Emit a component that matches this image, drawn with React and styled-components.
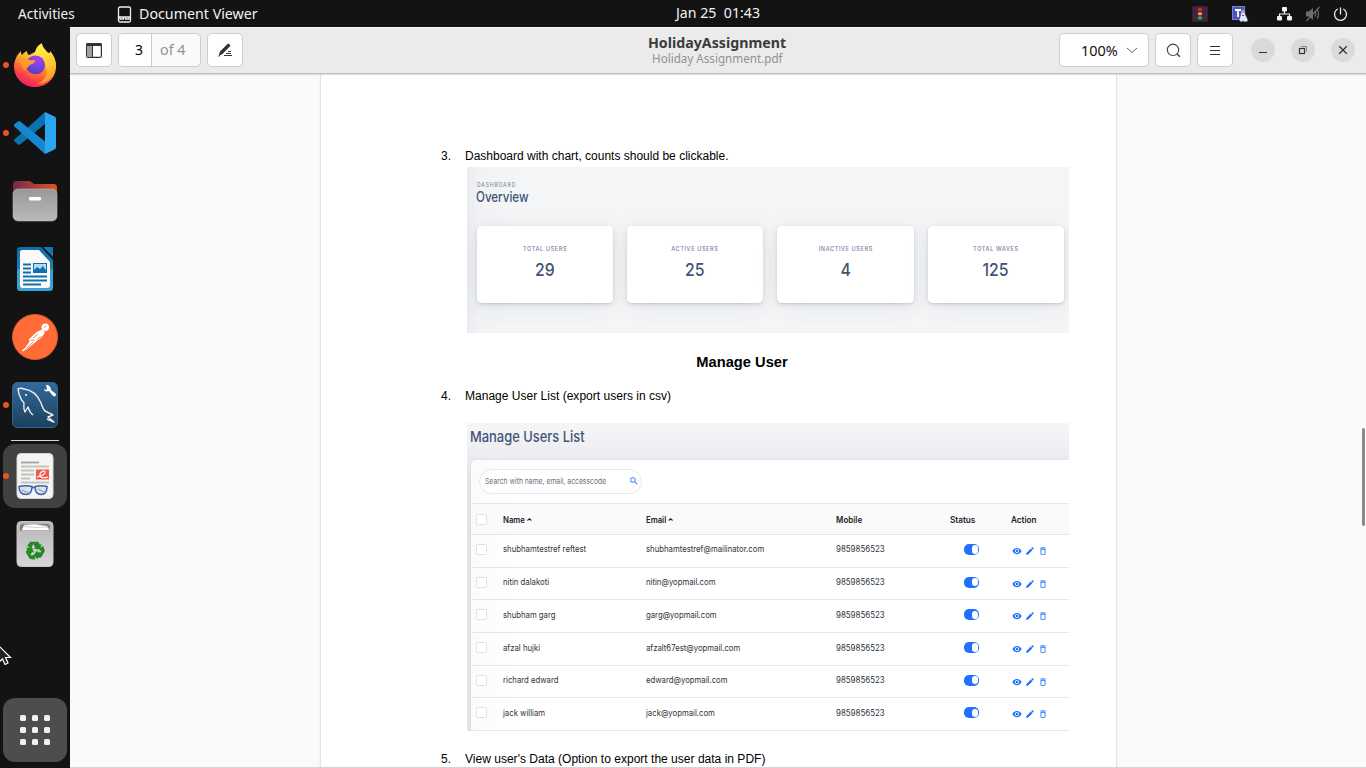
import React from "react";
import styled, { createGlobalStyle, css } from "styled-components";
import { MdRemoveRedEye, MdEdit, MdDeleteOutline, MdSearch } from "react-icons/md";

const Global = createGlobalStyle`
  * { box-sizing: border-box; }
  body { margin: 0; overflow: hidden; }
  svg { display: block; flex: none; }
`;

const ui = css`font-family: "Noto Sans", "Open Sans", sans-serif;`;
const doc = css`font-family: "Liberation Sans", Arial, sans-serif;`;

const Desktop = styled.div`
  ${ui}
  width: 1366px;
  height: 768px;
  display: flex;
  flex-direction: column;
  background: #131313;
  overflow: hidden;
  position: relative;
`;

/* Text drawn slightly narrower or wider than the font's natural width */
const Stretch = styled.span`
  display: inline-block;
  white-space: pre;
  transform: scaleX(${(p) => p.$x});
  transform-origin: ${(p) => p.$from || "left"} center;
`;

/* ---------- top bar ---------- */
const TopBar = styled.header`
  height: 27px;
  display: grid;
  grid-template-columns: 117px 551px 101px 1fr;
  align-items: center;
  color: #f2f2f2;
  font-size: 13.5px;
  line-height: 27px;
`;
const Activities = styled.div`
  padding-left: 18px;
  padding-top: 1px;
`;
const AppMenu = styled.div`
  display: flex;
  align-items: center;
  gap: 7px;
  padding-top: 1px;
`;
const Clock = styled.div`
  text-align: center;
  height: 27px;
  line-height: 25px;
`;
const Tray = styled.div`
  display: grid;
  grid-template-columns: 40px 45px 28px 28px 16px;
  justify-content: end;
  align-items: center;
  padding-right: 17px;
  height: 26px;
`;

/* ---------- dock ---------- */
const Main = styled.div`
  flex: 1;
  display: flex;
  min-height: 0;
`;
const Dock = styled.nav`
  width: 70px;
  padding: 6px 3px;
  display: flex;
  flex-direction: column;
`;
const Slot = styled.div`
  height: 64px;
  margin-bottom: 4px;
  border-radius: 12px;
  display: flex;
  align-items: center;
  justify-content: center;
  position: relative;
  background: ${(p) => p.$bg || "transparent"};
  ${(p) => p.$end && css`margin-top: auto; margin-bottom: 0;`}
  ${(p) =>
    p.$running &&
    css`
      &::before {
        content: "";
        position: absolute;
        left: 0;
        top: 29px;
        width: 6px;
        height: 6px;
        border-radius: 50%;
        background: #e95420;
      }
    `}
`;
const Divider = styled.div`
  height: 1px;
  margin: -1px 8px 3px;
  background: #d5d5d5;
`;
const Cursor = styled.svg`
  position: absolute;
  left: 0;
  top: 646px;
`;

/* ---------- window ---------- */
const Window = styled.section`
  flex: 1;
  display: flex;
  flex-direction: column;
  background: #fafafa;
  border-bottom: 1px solid #d4d4d4;
  position: relative;
`;
const HeaderBar = styled.div`
  height: 47px;
  flex: none;
  background: #ebebeb;
  border-top: 1px solid #f7f7f7;
  border-bottom: 1px solid #bfbfbf;
  box-shadow: 0 1px 1px rgba(0, 0, 0, 0.12);
  padding: 5px 11px 0 6px;
  display: grid;
  grid-template-columns: 1fr 280px 1fr;
  z-index: 1;
`;
const Group = styled.div`
  display: flex;
  gap: 6px;
  justify-content: ${(p) => (p.$end ? "flex-end" : "flex-start")};
`;
const Button = styled.button`
  ${ui}
  width: ${(p) => p.$w || 36}px;
  height: 34px;
  padding: ${(p) => p.$pad || 0};
  border: 1px solid #cdcdcd;
  border-radius: 5px;
  background: #fff;
  color: #111;
  font-size: 14px;
  display: flex;
  align-items: center;
  justify-content: ${(p) => (p.$pad ? "space-between" : "center")};
`;
const PageEntry = styled.div`
  width: 83px;
  height: 34px;
  border: 1px solid #cdcdcd;
  border-radius: 5px;
  background: #fafafa;
  display: flex;
  overflow: hidden;
  font-size: 14px;
  line-height: 31px;
`;
const PageNumber = styled.div`
  width: 33px;
  background: #fff;
  border-right: 1px solid #cdcdcd;
  padding-left: 16px;
  color: #000;
`;
const PageTotal = styled.div`
  padding-left: 8px;
  color: #929292;
`;
const TitleBlock = styled.div`
  text-align: center;
  padding-left: 3px;
`;
const Title = styled.div`
  font-size: 14px;
  font-weight: 700;
  line-height: 17px;
  color: #3b3b3b;
  margin-top: 1px;
`;
const Subtitle = styled.div`
  font-size: 12px;
  line-height: 17px;
  margin-top: -1px;
  color: #929292;
`;
const Round = styled.button`
  width: 24px;
  height: 24px;
  border: 0;
  padding: 0;
  border-radius: 50%;
  background: #dadada;
  display: flex;
  align-items: center;
  justify-content: center;
  margin: 5px 0 0 ${(p) => (p.$first ? 12 : 10)}px;
`;

const Viewport = styled.div`
  flex: 1;
  min-height: 0;
  overflow: hidden;
  padding-left: 251px;
`;
const Page = styled.article`
  ${doc}
  width: 795px;
  height: 900px;
  background: #fff;
  box-shadow: 0 0 0 1px #e4e4e4, 0 0 3px rgba(0, 0, 0, 0.12);
  padding: 73px 47px 0 120px;
  color: #000;
`;
const Item = styled.div`
  display: grid;
  grid-template-columns: 24px 1fr;
  font-size: 12px;
  line-height: 18px;
  height: 18px;
`;
const Heading = styled.h2`
  margin: 18px 0 0;
  padding: 0 52px 0 26px;
  text-align: center;
  font-size: 14.7px;
  line-height: 22px;
  height: 22px;
  font-weight: 700;
`;

const Figure = styled.div`
  font-family: Inter, "Liberation Sans", sans-serif;
  margin-left: 26px;
  width: 602px;
`;

/* ---------- overview figure ---------- */
const Overview = styled(Figure)`
  margin-top: 2px;
  height: 166px;
  padding: 14px 5px 0 9.5px;
  overflow: hidden;
  background: linear-gradient(90deg, rgba(215, 220, 226, 0.4), rgba(232, 235, 239, 0.25) 12px, transparent 50px), #f4f5f7;
`;
const Kicker = styled.div`
  font-size: 5.6px;
  line-height: 8px;
  letter-spacing: 0.95px;
  color: #818ea3;
  font-weight: 500;
`;
const FigureTitle = styled.div`
  font-size: ${(p) => p.$size}px;
  line-height: 18px;
  margin: ${(p) => p.$shift || 0}px 0 ${(p) => -(p.$shift || 0)}px -0.5px;
  font-weight: 550;
  color: #425475;
`;
const Cards = styled.div`
  margin-top: 19.5px;
  display: grid;
  grid-template-columns: repeat(4, 1fr);
  gap: 14px;
`;
const Card = styled.div`
  height: 77.5px;
  border-radius: 4.5px;
  background: #fff;
  text-align: center;
  padding-top: 19px;
  box-shadow: 0 2px 24px rgba(90, 97, 105, 0.06), 0 6px 24px rgba(90, 97, 105, 0.03),
    0 2px 5px rgba(90, 97, 105, 0.12), 0 1px 2px rgba(90, 97, 105, 0.16);
`;
const CardLabel = styled.div`
  font-size: 6.3px;
  line-height: 9px;
  letter-spacing: 0.7px;
  color: #76839b;
  font-weight: 500;
`;
const CardValue = styled.div`
  margin-top: 5px;
  font-size: 17.5px;
  line-height: 22px;
  font-weight: 550;
  color: #425475;
`;

/* ---------- users figure ---------- */
const Users = styled(Figure)`
  margin-top: 18px;
  height: 308px;
  overflow: hidden;
  background: linear-gradient(#f5f6f8, #ebecf0 37px, #e3e5e9 60px);
  padding: 4px 0 0 3.5px;
`;
const Panel = styled.div`
  margin-top: 14.5px;
  height: 271.5px;
  border-top-left-radius: 5px;
  background: linear-gradient(90deg, #fafbfb, #fff 50px);
  display: flex;
  flex-direction: column;
  box-shadow: 0 0 3px rgba(90, 97, 105, 0.12);
  border-bottom: 1px solid #e3e6ea;
`;
const SearchRow = styled.div`
  height: 43.5px;
  padding: 9px 0 0 8px;
`;
const SearchPill = styled.div`
  width: 163px;
  height: 25px;
  border: 1px solid #e5e8ec;
  border-radius: 13px;
  background: #fff;
  display: flex;
  align-items: center;
  justify-content: space-between;
  padding: 0 2px 0 5px;
  font-size: 8.2px;
  color: #6b7480;
  overflow: hidden;
`;
const SearchText = styled.div`
  width: 130px;
  line-height: 12px;
`;
const Row = styled.div`
  height: ${(p) => (p.$head ? 31 : 32.7)}px;
  flex: none;
  border-top: 1px solid #e3e6ea;
  background: ${(p) => (p.$head ? "#fafafb" : "transparent")};
  display: grid;
  grid-template-columns: 26.5px 143.5px 189.5px 114px 61.5px 1fr;
  align-items: center;
  padding: ${(p) => (p.$head ? "2px 0 0" : "0 0 2.5px")} 5.5px;
  font-size: 8.8px;
  line-height: 12px;
  font-weight: ${(p) => (p.$head ? 600 : 400)};
  color: ${(p) => (p.$head ? "#212529" : "#2f343a")};
`;
const Checkbox = styled.span`
  width: 11px;
  height: 11px;
  border: 1px solid #dfe2e6;
  border-radius: 1.5px;
  background: #fff;
`;
const Toggle = styled.span`
  width: 15px;
  height: 11px;
  margin-left: 14px;
  border-radius: 5px;
  background: #2271fb;
  display: flex;
  justify-content: flex-end;
  align-items: center;
  padding-right: 1px;
  &::after {
    content: "";
    width: 6px;
    height: 8.5px;
    border-radius: 3px;
    background: #fff;
  }
`;
const Actions = styled.span`
  display: grid;
  grid-template-columns: 13px 13px 11px;
  align-items: center;
  color: #2271fb;
  padding: 3px 0 0 1px;
`;
const Spaced = styled(Item)`margin-top: ${(p) => p.$top}px;`;
const Scrollbar = styled.div`
  position: absolute;
  right: 1px;
  top: 401px;
  width: 3px;
  height: 98px;
  border-radius: 2px;
  background: #8c8c8c;
`;

const T = ({ children, from, x = 0.88 }) => (
  <Stretch $x={x} $from={from}>{children}</Stretch>
);

/* ---------- dock icons ---------- */
const Firefox = () => (
  <svg width="44" height="44" viewBox="0 0 44 44">
    <defs>
      <linearGradient id="ffb" x1=".8" y1="0" x2=".3" y2="1">
        <stop offset="0" stopColor="#fff044" />
        <stop offset=".35" stopColor="#ffb02e" />
        <stop offset=".65" stopColor="#ff5b36" />
        <stop offset="1" stopColor="#f5156c" />
      </linearGradient>
      <linearGradient id="ffy" x1=".4" y1="0" x2=".7" y2="1">
        <stop offset="0" stopColor="#fff14f" />
        <stop offset=".6" stopColor="#ffc52e" />
        <stop offset="1" stopColor="#ff8d2e" />
      </linearGradient>
      <radialGradient id="ffp" cx=".6" cy=".2" r=".9">
        <stop offset="0" stopColor="#b13cf0" />
        <stop offset=".5" stopColor="#7542e5" />
        <stop offset="1" stopColor="#4b3bb8" />
      </radialGradient>
    </defs>
    <path fill="url(#ffb)" d="M3 15c1-3 3-5 5-7 0 2 0 3 1 4 1-2 3-3 5-4 0 2 1 4 2 4l8-4 13 2c4 3 6 8 6 13 0 12-9 21-21 21S1 35 1 23c0-3 1-6 2-8z" />
    <path fill="url(#ffy)" d="M22 9c1-4 3-7 7-9 0 4 4 7 7 11 1-1 1-2 1-3 5 5 7 13 5 19-2 8-9 14-18 14 7-3 11-8 10-15-1-7-6-11-13-13z" />
    <circle cx="22.5" cy="22" r="9.5" fill="url(#ffp)" />
    <path fill="#ff9b2e" d="M7 17c4-3 8-1 10 0 3 1 5-1 5 1 0 3-5 3-6 5-2 3-4 1-3 5-3-2-5-6-6-11z" />
    <path fill="#ff6636" d="M13 24c2 5 6 7.500 11 7 4-.5 6-2.500 8-5 0 5-4 9-9 9.500-7 .5-11-5-10-11.500z" opacity=".75" />
  </svg>
);
const Code = () => (
  <svg width="42" height="42" viewBox="0 0 42 42">
    <path fill="#0d70b0" d="M0 29l4 3.400c.7.5 1.500.5 2.200 0L31 12V0L.4 27.400C0 28 0 28.500 0 29z" />
    <path fill="#1787cf" d="M0 12.600L4 9.500c.7-.5 1.500-.5 2.200 0L31 29.500V42L.4 14.600c-.5-.6-.5-1.400-.4-2z" />
    <path fill="#2aa5f0" d="M31 0l9.500 4.500c1 .5 1.500 1.300 1.500 2.300v28.400c0 1-.5 1.800-1.500 2.300L31 42c-1 0 0-1 0-2z" />
  </svg>
);
const Files = () => (
  <svg width="46" height="42" viewBox="0 0 46 42">
    <defs>
      <linearGradient id="fdb"><stop stopColor="#77294f" /><stop offset="1" stopColor="#e0531f" /></linearGradient>
      <linearGradient id="fdf" x2="0" y2="1"><stop stopColor="#999" /><stop offset="1" stopColor="#bababa" /></linearGradient>
    </defs>
    <path fill="url(#fdb)" d="M1 5c0-3 1-4 4-4h13l4 3h19c3 0 4 1 4 4v15H1z" />
    <rect x="1" y="9" width="44" height="32" rx="5" fill="url(#fdf)" stroke="#b9b9b9" strokeWidth=".6" />
    <rect x="17" y="17" width="12" height="3.500" rx="1" fill="#fff" />
  </svg>
);
const Writer = () => (
  <svg width="38" height="46" viewBox="0 0 38 46">
    <defs><linearGradient id="wr" x2="0" y2="1"><stop stopColor="#096fa8" /><stop offset=".5" stopColor="#1c80b8" /><stop offset=".52" stopColor="#3b9dd0" /><stop offset="1" stopColor="#3ba5d8" /></linearGradient></defs>
    <path fill="url(#wr)" d="M5 1h20l12 13v27c0 3-1 4-4 4H5c-3 0-4-1-4-4V5c0-3 1-4 4-4z" />
    <path fill="#1178b2" d="M27 1h9c1 0 1 0 1 1v9z" />
    <path fill="#fafafa" d="M6 4h17l11 12v23c0 2-1 3-3 3H6c-1 0-2-1-2-3V6c0-1 1-2 2-2z" />
    <path stroke="#0f6faa" strokeWidth="2" d="M7 18.500h8M7 22.500h8M7 26.500h8M7 30.500h24M7 34.500h24M7 38.500h18" />
    <rect x="17.500" y="17.500" width="13" height="9" fill="#b7dcf0" stroke="#0f6faa" />
    <path fill="#0f6faa" d="M18 26v-2l3-3 3 2 3-3 4 6z" />
  </svg>
);
const Postman = () => (
  <svg width="46" height="46" viewBox="0 0 46 46">
    <circle cx="23" cy="23" r="22.500" fill="#ff6c37" stroke="#d95b2d" />
    <circle cx="33.300" cy="13.200" r="3.700" fill="#fff" />
    <path fill="#fff" d="M30 15.500c2 .8 3 2 2.500 3.500-2 4-5.500 6.500-9.500 9.500l-8 6.500-4.500 2.500-.5-1.200 3-2.300 4.500-6.500-.5-2c3.500-4 8-8.500 13-10z" />
    <path stroke="#ff6c37" strokeWidth=".8" fill="none" d="M18.500 26.500l4-.5M21 24l5-4M14.500 34.500L21 28M32 14l2.500-2.500M25 25.500l4-3.500" />
  </svg>
);
const Workbench = () => (
  <svg width="46" height="46" viewBox="0 0 46 46">
    <defs><linearGradient id="mw" x2="0" y2="1"><stop stopColor="#326a9c" /><stop offset="1" stopColor="#1d3f5c" /></linearGradient></defs>
    <rect x=".5" y=".5" width="45" height="45" rx="5" fill="url(#mw)" stroke="#33658e" />
    <path fill="none" stroke="#e8eef3" strokeWidth="1.400" strokeLinejoin="round" d="M21 33c-3-2-4-5-5-8l-3 5c-2-3-1-6-1-9-3-3-4-6-5-9L6 7c2-1 4-1 6 0 9 1 14 7 17 14 1 3 2 6 4 8l8 4-5 2 6 5-7-3" />
    <path fill="#fff" d="M32 7l2 1 1-1-1-4c3 0 5 2 5 5l5 4c0 2-1 3-3 2l-4-5c-3 1-5 0-5-2z" />
    <circle cx="14" cy="13" r="1" fill="#fff" />
  </svg>
);
const Viewer = () => (
  <svg width="38" height="46" viewBox="0 0 38 46">
    <rect x="1" y=".5" width="36" height="45" rx="4" fill="#f4f4f4" stroke="#d6d6d6" />
    <path stroke="#aaa297" strokeWidth="1.800" d="M5 9.500h18" />
    <path stroke="#c8c3b8" strokeWidth="1.800" d="M5 13.500h28M5 17.500h13M5 21.500h13M5 25.500h9M5 29.500h28" />
    <rect x="20" y="16.500" width="13" height="10" fill="#f4584c" />
    <path fill="none" stroke="#fff" strokeWidth="1.100" d="M21 24c5-1 8-3 8-5s-4-1-5 2 2 5 8 3" />
    <path fill="#d5d9de" fillOpacity=".7" stroke="#2f66b5" strokeWidth="1.500" d="M3 33.500c4-1 9-1 13 0 0 5-1.500 8-6 8s-7-3-7-8zM19 33.500c4-1 8-1 12 0 0 5-2 8-6 8s-6-3-6-8zM16 34.500h3" />
    <path stroke="#888" strokeWidth=".9" d="M6 37l8 4M22 36l8 4" />
  </svg>
);
const Trash = () => (
  <svg width="38" height="46" viewBox="0 0 38 46">
    <defs><linearGradient id="tr" x2="0" y2="1"><stop stopColor="#b7b7b7" /><stop offset="1" stopColor="#d6d6d6" /></linearGradient></defs>
    <rect x="1" y=".5" width="36" height="45" rx="4" fill="url(#tr)" stroke="#c3c3c3" />
    <path fill="#7d7d7d" d="M4 10V6c0-2 1-3 3-3h24c2 0 3 1 3 3v4z" />
    <path fill="#fff" stroke="#aaa" strokeWidth=".5" d="M5.500 9.500L8 4l10-1 13 2 3 4.500z" />
    <path fill="none" stroke="#b5b5b5" strokeWidth=".6" d="M8 5.500l12 1 11-.5" />
    <g transform="translate(19 29.500)">
      {[0, 120, 240].map((a) => (
        <g key={a} transform={`rotate(${a})`}>
          <path fill="#218a21" d="M-4.500-8.800h6.500c1 0 1.600.4 2 1.200l1 1.800 1.800-1-2.300 5.800-6-1 1.800-1-2-3.400-2.300 3.900-4-2.300z" />
        </g>
      ))}
    </g>
  </svg>
);
const AppGrid = () => (
  <svg width="32" height="32" viewBox="0 0 32 32" fill="#f0f0f0">
    {[1, 13, 25].map((y) => [1, 13, 25].map((x) => <rect key={x + "-" + y} x={x} y={y} width="6" height="6" rx="1.500" />))}
  </svg>
);

const users = [
  ["shubhamtestref reftest", "shubhamtestref@mailinator.com"],
  ["nitin dalakoti", "nitin@yopmail.com"],
  ["shubham garg", "garg@yopmail.com"],
  ["afzal hujki", "afzalt67est@yopmail.com"],
  ["richard edward", "edward@yopmail.com"],
  ["jack william", "jack@yopmail.com"],
];
const totals = [["TOTAL USERS", "29"], ["ACTIVE USERS", "25"], ["INACTIVE USERS", "4"], ["TOTAL WAVES", "125"]];

const SortIcon = styled.svg`
  display: inline-block;
  vertical-align: top;
  margin-left: 2px;
`;
const Sort = () => (
  <SortIcon width="6" height="12" viewBox="0 0 6 12">
    <path d="M.8 6.500L3 4.800 5.200 6.500" fill="none" stroke="#222" strokeWidth="1.200" />
  </SortIcon>
);

export default function App() {
  return (
    <Desktop>
      <Global />
      <TopBar>
        <Activities><Stretch $x={1.01}>Activities</Stretch></Activities>
        <AppMenu>
          <svg width="15" height="17" viewBox="0 0 15 17" fill="none" stroke="#eee" strokeWidth="1.300">
            <rect x="1.500" y="1" width="12" height="15" rx="1.500" />
            <path d="M2 11h11M3 11.500v1.500h3.500v-2M8.500 11v2H12v-2" />
          </svg>
          <Stretch $x={1.055}>Document Viewer</Stretch>
        </AppMenu>
        <Clock><Stretch $x={1.05} $from="center">{"Jan 25  01:43"}</Stretch></Clock>
        <Tray>
          <svg width="16" height="16" viewBox="0 0 16 16">
            <rect x=".5" y=".5" width="15" height="15" rx="1" fill="#452344" stroke="#38203a" />
            <ellipse cx="8" cy="3.500" rx="2.200" ry="1.700" fill="#e0242b" /><ellipse cx="8" cy="7.700" rx="2.200" ry="1.700" fill="#eba13a" /><ellipse cx="8" cy="12" rx="2.200" ry="1.700" fill="#3cae49" />
          </svg>
          <svg width="17" height="17" viewBox="0 0 17 17">
            <rect x=".5" y=".5" width="12" height="13" fill="#4b53bc" stroke="#7b81d0" />
            <path d="M3 4h6M6 4v7" stroke="#fff" strokeWidth="1.800" />
            <path d="M11 4c2 0 2 2 2 4l2 4 1 3-3 1-2-1-2 1-2-2 1-3 1-3c0-2 0-4 2-4z" fill="#e8e8f4" stroke="#4b4f8a" strokeWidth=".6" />
            <path d="M10 6h2M10 9.500h2" stroke="#333866" strokeWidth=".8" />
          </svg>
          <svg width="16" height="14" viewBox="0 0 16 14" fill="#f2f2f2">
            <rect x="5" y="0" width="5" height="4.500" rx="1" /><rect x="0" y="9" width="5" height="4.500" rx="1" /><rect x="10" y="9" width="5" height="4.500" rx="1" />
            <path d="M7.500 4v3M2.500 9.500V7h10v2.500" fill="none" stroke="#f2f2f2" strokeWidth="1.200" />
          </svg>
          <svg width="16" height="16" viewBox="0 0 16 16">
            <path fill="#6c6c6c" d="M1 5.500h3L8 2v12l-4-3.500H1z" />
            <path fill="none" stroke="#6c6c6c" strokeWidth="1.200" d="M10 5.500c1 1 1 4 0 5M12 3.500c2 2 2 7 0 9M14.500 1L1.500 15" />
          </svg>
          <svg width="15" height="15" viewBox="0 0 15 15" fill="none" stroke="#eee" strokeWidth="1.300" strokeLinecap="round">
            <path d="M7.500 1v6M4.300 2.300a6 6 0 1 0 6.400 0" />
          </svg>
        </Tray>
      </TopBar>
      <Main>
        <Dock>
          <Slot $running><Firefox /></Slot>
          <Slot $running><Code /></Slot>
          <Slot><Files /></Slot>
          <Slot><Writer /></Slot>
          <Slot><Postman /></Slot>
          <Slot $running><Workbench /></Slot>
          <Divider />
          <Slot $running $bg="#414141"><Viewer /></Slot>
          <Slot><Trash /></Slot>
          <Slot $end $bg="#4d4d4d"><AppGrid /></Slot>
        </Dock>
        <Window>
          <HeaderBar>
            <Group>
              <Button>
                <svg width="16" height="15" viewBox="0 0 16 15">
                  <rect x=".6" y=".6" width="14.800" height="13.800" rx="1.500" fill="#fff" stroke="#333" strokeWidth="1.200" />
                  <path fill="#333" d="M0 1.500Q0 0 1.500 0h13Q16 0 16 1.500V3H0z" /><path fill="#a0a0a0" d="M1 3h5v11H1z" /><path stroke="#333" d="M6.500 3v11" />
                </svg>
              </Button>
              <PageEntry>
                <PageNumber>3</PageNumber>
                <PageTotal><Stretch $x={1.02}>of 4</Stretch></PageTotal>
              </PageEntry>
              <Button>
                <svg width="16" height="16" viewBox="0 0 16 16">
                  <path fill="#333" d="M1.500 14L3 9.500 10.500 2c1.200-1.200 3.700 1 2.500 2.300L5.500 12zM.8 14.700l1-1.200 1.500.5z" />
                  <path stroke="#333" strokeWidth="1.100" d="M11 9.500h3M9 11.500h5M7 13.500h8" />
                </svg>
              </Button>
            </Group>
            <TitleBlock>
              <Title><Stretch $x={1.015} $from="center">HolidayAssignment</Stretch></Title>
              <Subtitle><Stretch $x={0.97} $from="center">Holiday Assignment.pdf</Stretch></Subtitle>
            </TitleBlock>
            <Group $end>
              <Button $w={90} $pad="0 10px 0 21px">
                <Stretch $x={1.03}>100%</Stretch>
                <svg width="12" height="7" viewBox="0 0 12 7"><path d="M1 1l5 4.500L11 1" fill="none" stroke="#666" strokeWidth="1" /></svg>
              </Button>
              <Button>
                <svg width="15" height="15" viewBox="0 0 15 15" fill="none" stroke="#444" strokeWidth="1.100"><circle cx="7" cy="6.800" r="5.700" /><path d="M11 11l3 2.800" strokeWidth="1.500" /></svg>
              </Button>
              <Button>
                <svg width="12" height="11" viewBox="0 0 12 11"><path d="M1 1.500h10M1 5.500h10M1 9.500h10" stroke="#333" /></svg>
              </Button>
              <Round $first><svg width="10" height="10" viewBox="0 0 10 10"><path d="M1 7.500h8" stroke="#333" /></svg></Round>
              <Round><svg width="10" height="10" viewBox="0 0 10 10" fill="none"><path d="M3 1.500h5.500V7" stroke="#888" /><rect x="1.500" y="3.500" width="5" height="5" stroke="#333" strokeWidth="1.200" /></svg></Round>
              <Round><svg width="10" height="10" viewBox="0 0 10 10"><path d="M1.200 1.200l7.600 7.600M8.800 1.200L1.200 8.800" stroke="#333" strokeWidth="1.300" /></svg></Round>
            </Group>
          </HeaderBar>
          <Viewport>
            <Page>
              <Item><span>3.</span><Stretch $x={1}>Dashboard with chart, counts should be clickable.</Stretch></Item>
              <Overview>
                <Kicker><T x={0.9}>DASHBOARD</T></Kicker>
                <FigureTitle $size={14.3} $shift={-1}><T x={0.81}>Overview</T></FigureTitle>
                <Cards>
                  {totals.map(([label, value]) => (
                    <Card key={label}>
                      <CardLabel><T x={0.88} from="center">{label}</T></CardLabel>
                      <CardValue><T x={0.9} from="center">{value}</T></CardValue>
                    </Card>
                  ))}
                </Cards>
              </Overview>
              <Heading>Manage User</Heading>
              <Spaced $top={14}><span>4.</span><Stretch $x={1.003}>Manage User List (export users in csv)</Stretch></Spaced>
              <Users>
                <FigureTitle $size={15} $shift={1}><T x={0.86}>Manage Users List</T></FigureTitle>
                <Panel>
                  <SearchRow>
                    <SearchPill>
                      <SearchText><T x={0.83}>Search with name, email, accesscode</T></SearchText>
                      <MdSearch size={10} color="#2271fb" />
                    </SearchPill>
                  </SearchRow>
                  <Row $head>
                    <Checkbox />
                    <T>Name<Sort /></T>
                    <T>Email<Sort /></T>
                    <T x={0.91}>Mobile</T>
                    <T x={0.93}>Status</T>
                    <T x={0.93}>Action</T>
                  </Row>
                  {users.map(([name, email]) => (
                    <Row key={email}>
                      <Checkbox />
                      <T>{name}</T>
                      <T>{email}</T>
                      <T x={0.9}>9859856523</T>
                      <Toggle />
                      <Actions>
                        <MdRemoveRedEye size={10} />
                        <MdEdit size={10} />
                        <MdDeleteOutline size={10} />
                      </Actions>
                    </Row>
                  ))}
                </Panel>
              </Users>
              <Spaced $top={19}><span>5.</span><Stretch $x={1.003}>View user's Data (Option to export the user data in PDF)</Stretch></Spaced>
            </Page>
          </Viewport>
          <Scrollbar />
        </Window>
      </Main>
      <Cursor width="12" height="20" viewBox="0 0 12 20">
        <path d="M-4-3L10.500 11.500H5.500L8 17l-3 1.500L2.500 13-1 16z" fill="#222" stroke="#fff" strokeWidth="1.200" />
      </Cursor>
    </Desktop>
  );
}
